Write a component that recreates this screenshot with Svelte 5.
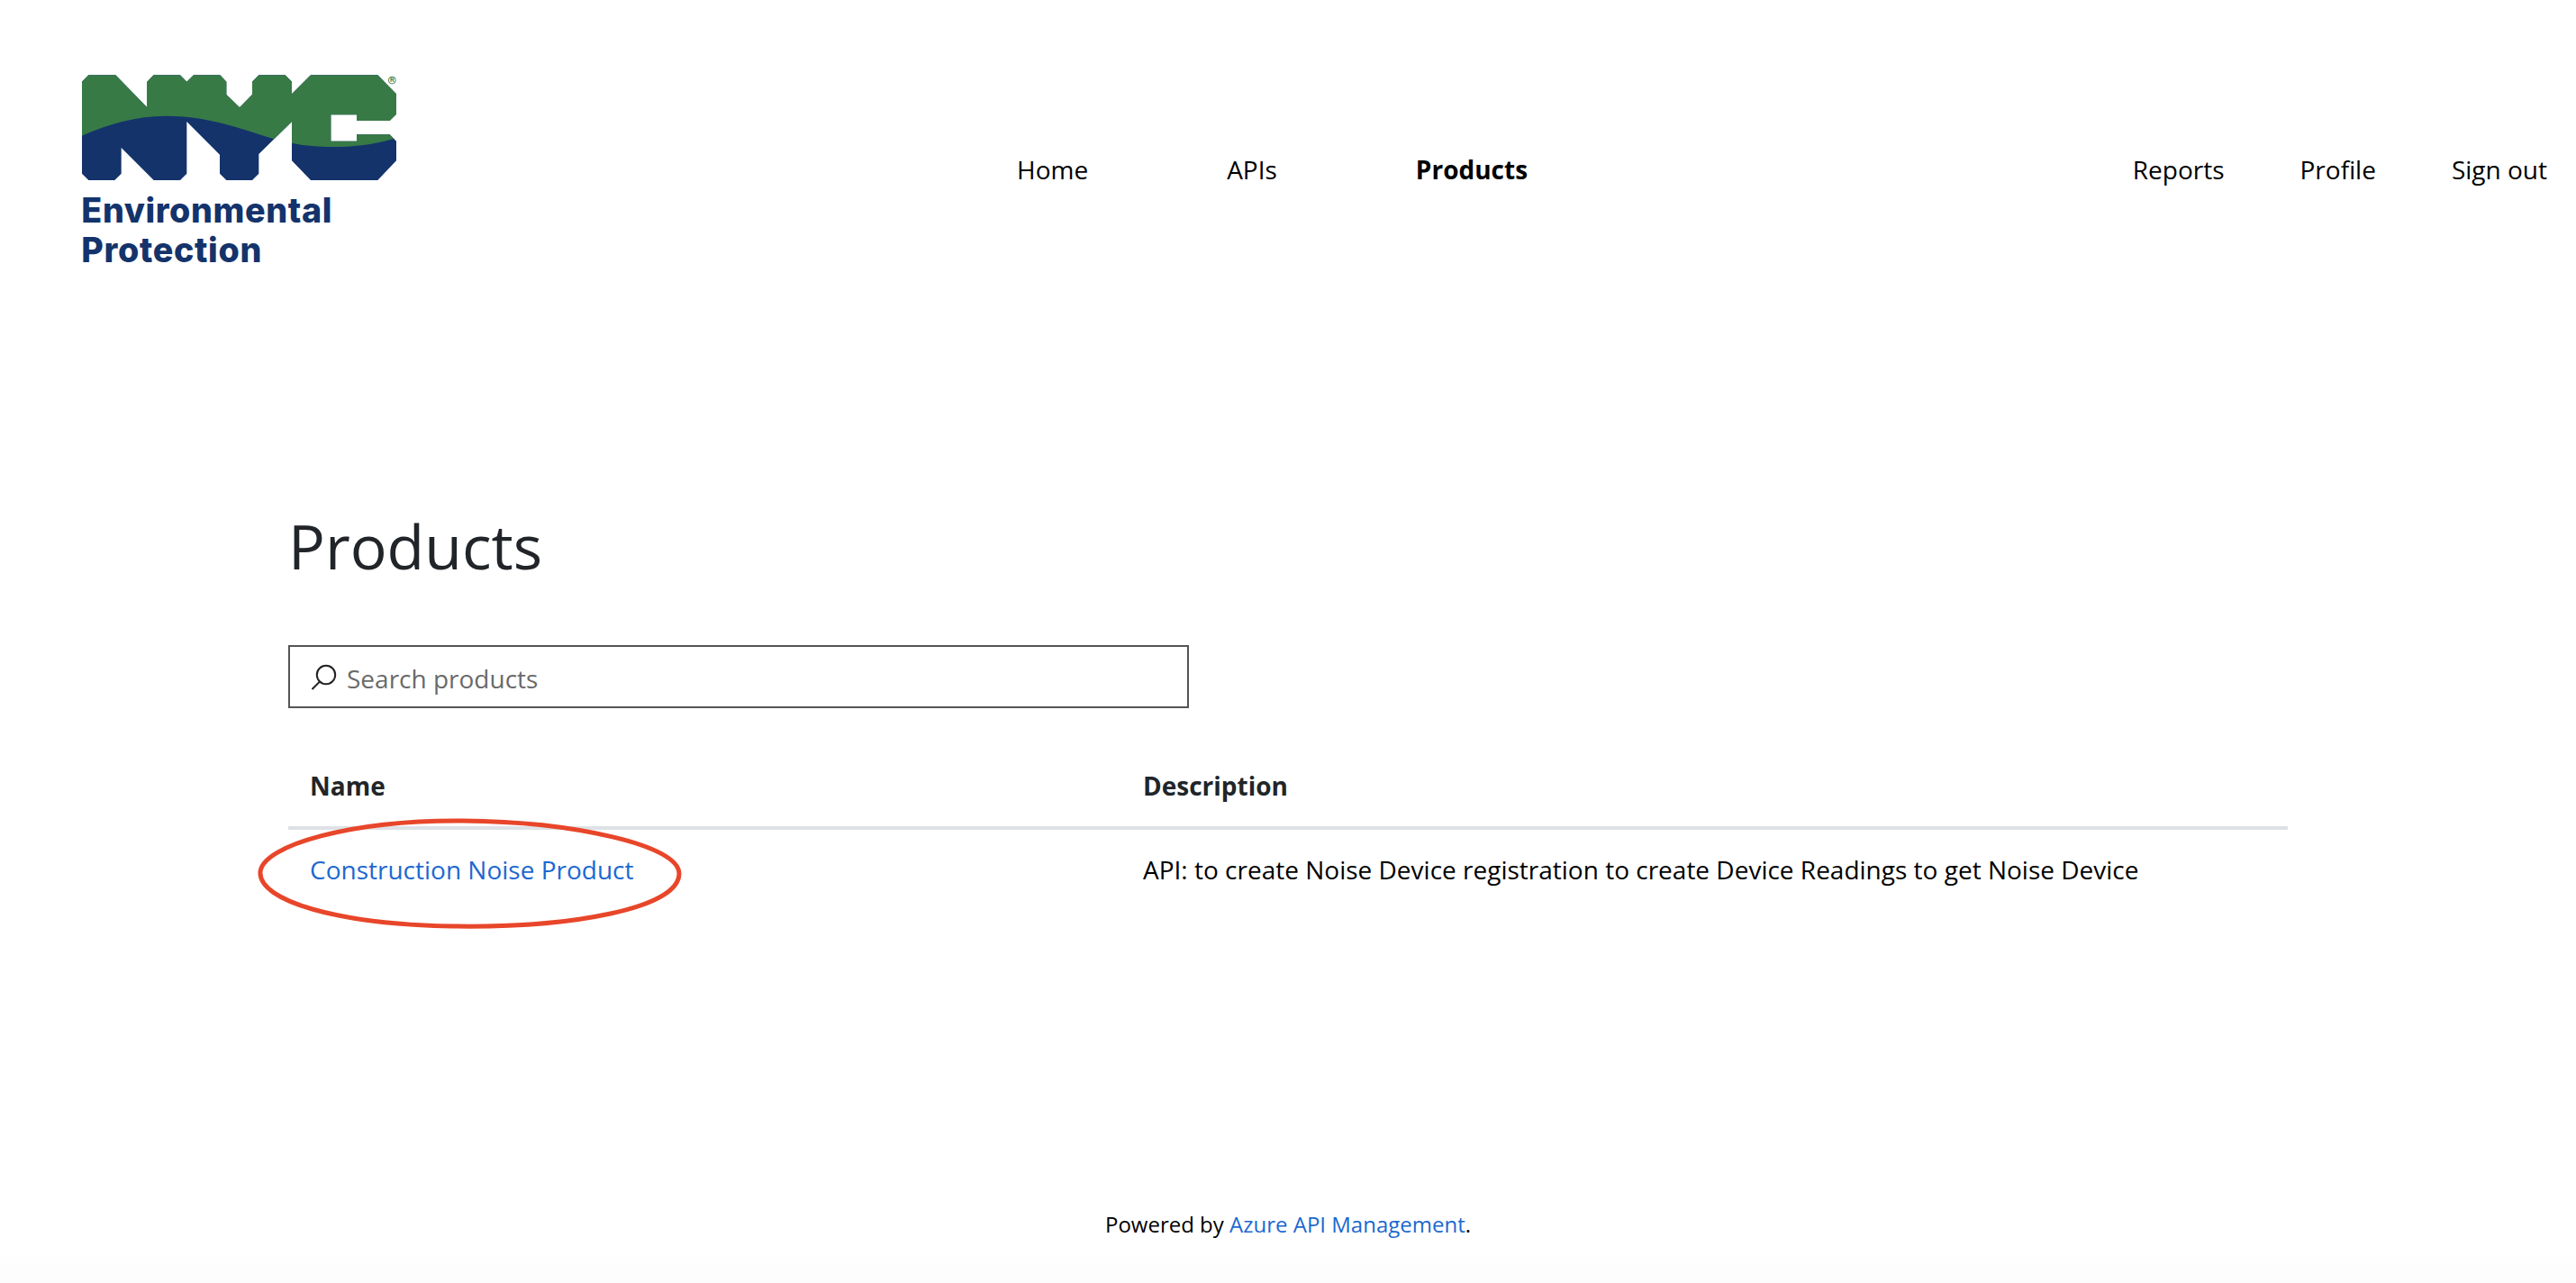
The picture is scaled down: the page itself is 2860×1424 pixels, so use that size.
<script lang="ts">
  const leftNav = [
    { label: 'Home', active: false },
    { label: 'APIs', active: false },
    { label: 'Products', active: true }
  ];
  const rightNav = ['Reports', 'Profile', 'Sign out'];
  const products = [
    {
      name: 'Construction Noise Product',
      description: 'API: to create Noise Device registration to create Device Readings to get Noise Device'
    }
  ];

  const nycShape =
    'M93 92 115 70H205L310 178V92L332 70H420L442 92 465 70H553L574 92V135L618 178 660 135V92L682 70H770L792 92V133L855 70H1078L1140 133V200L1118 222H1008V202H922V290H1008V268H1118L1140 290V355L1078 420H855L792 355V225L682 333V398L660 420H574L552 398V335L442 225V398L420 420H332L224 312V398L202 420H115L93 398Z';
</script>

<div class="page">
  <header class="header">
    <a class="logo" href="#home" aria-label="NYC Environmental Protection">
      <svg width="420" height="260" viewBox="0 0 1260 780">
        <defs>
          <clipPath id="nyc-clip"><path d={nycShape} /></clipPath>
        </defs>
        <path d={nycShape} fill="#14336b" />
        <path
          clip-path="url(#nyc-clip)"
          fill="#377a46"
          d="M80 60H1160V276L1140 280C1080 298 1020 308 950 309 860 310 800 302 730 282 620 250 520 206 370 206 280 206 180 232 93 272L80 278Z"
        />
        <circle cx="1126" cy="87" r="12" fill="none" stroke="#377a46" stroke-width="2.5" />
        <text x="1126" y="94" class="reg">R</text>
        <text x="91" y="560" class="wordmark" textLength="834">Environmental</text>
        <text x="91" y="692" class="wordmark" textLength="600">Protection</text>
      </svg>
    </a>

    <nav class="nav">
      <div class="nav-left">
        {#each leftNav as item}
          <a href="#nav" class:active={item.active}>{item.label}</a>
        {/each}
      </div>
      <div class="nav-right">
        {#each rightNav as label}
          <a href="#nav">{label}</a>
        {/each}
      </div>
    </nav>
  </header>

  <main class="content">
    <h1>Products</h1>

    <div class="search">
      <svg width="30" height="30" viewBox="0 0 30 30" fill="none" stroke="#222" stroke-width="2">
        <circle cx="16" cy="13" r="10.2" />
        <path d="M9 20.5 .5 29" />
      </svg>
      <span>Search products</span>
    </div>

    <div class="table">
      <div class="row head">
        <div>Name</div>
        <div>Description</div>
      </div>
      {#each products as product}
        <div class="row">
          <div class="name-cell">
            <a href="#product">{product.name}</a>
            <svg class="circle" width="480" height="126" viewBox="0 0 480 126" fill="none">
              <path
                d="M228 3C105 2 5 30 3 60 1 92 90 118 216 120 350 122 467 100 468 62 469 30 350 4 228 3Z"
                stroke="#e8462a"
                stroke-width="5"
              />
            </svg>
          </div>
          <div>{product.description}</div>
        </div>
      {/each}
    </div>
  </main>

  <footer class="footer">
    Powered by <a href="#azure">Azure API Management</a>.
  </footer>
</div>

<style>
  :global(body) {
    margin: 0;
    background: #fff;
  }

  .page {
    width: 2860px;
    height: 1424px;
    display: flex;
    flex-direction: column;
    font-family: 'Open Sans', sans-serif;
    color: #000;
    font-size: 28px;
    overflow: hidden;
  }

  a {
    text-decoration: none;
    color: inherit;
  }

  .header {
    display: flex;
    align-items: center;
    height: 260px;
    margin-top: 60px;
    padding-left: 60px;
    padding-right: 32px;
  }

  .logo {
    display: block;
    height: 260px;
    flex: none;
  }

  .reg {
    font-family: 'Liberation Sans', sans-serif;
    font-size: 20px;
    font-weight: 700;
    fill: #377a46;
    text-anchor: middle;
  }

  .wordmark {
    font-family: Inter, 'Liberation Sans', sans-serif;
    font-size: 113px;
    font-weight: 800;
    fill: #14336b;
  }

  .nav {
    flex: 1;
    display: flex;
    justify-content: space-between;
    align-items: center;
    margin-left: 649px;
    margin-bottom: 4px;
  }

  .nav-left {
    display: flex;
    gap: 154px;
  }

  .nav-right {
    display: flex;
    gap: 84px;
  }

  .nav a.active {
    font-weight: 700;
  }

  .content {
    flex: 1;
    padding: 240px 320px 0;
  }

  h1 {
    margin: 0;
    font-size: 68px;
    font-weight: 400;
    line-height: 92px;
    color: #212529;
  }

  .search {
    box-sizing: border-box;
    width: 1000px;
    height: 70px;
    margin-top: 64px;
    border: 2px solid #555;
    display: flex;
    align-items: center;
    gap: 9px;
    padding-left: 24px;
    color: #6a6a6a;
  }

  .search span {
    margin-top: 3px;
  }

  .table {
    margin-top: 43px;
    width: 2220px;
  }

  .row {
    display: grid;
    grid-template-columns: 925px 1fr;
    padding: 0 24px;
    height: 88px;
    align-items: center;
  }

  .row.head {
    height: 85px;
    padding-bottom: 3px;
    font-weight: 700;
    color: #212529;
    border-bottom: 4px solid #dee2e6;
  }

  .name-cell {
    position: relative;
  }

  .name-cell a {
    color: #1d68d0;
  }

  .circle {
    position: absolute;
    left: -58px;
    top: -38px;
    pointer-events: none;
  }

  .footer {
    height: 82px;
    text-align: center;
    font-size: 24px;
    background: linear-gradient(#fff 50%, #fcfcfc);
  }

  .footer a {
    color: #1d68d0;
  }
</style>
